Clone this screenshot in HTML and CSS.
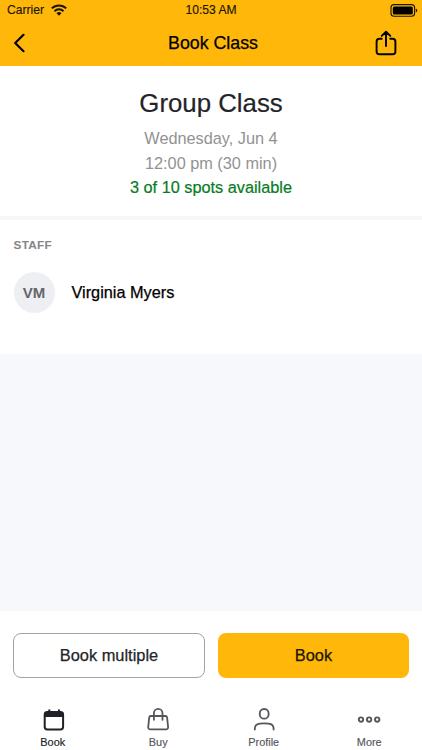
FILE: index.html
```html
<!DOCTYPE html>
<html lang="en">
<head>
<meta charset="utf-8">
<title>Book Class</title>
<link rel="stylesheet" href="styles.css">
</head>
<body>
<div class="app">
  <header class="header">
    <div class="status">
      <div class="carrier">Carrier
        <svg width="16" height="12" viewBox="0 0 16 12" fill="none" stroke="#1c1500" stroke-width="2"><path d="M.8 4.4a10.4 10.4 0 0 1 14.4 0M3.5 7.2a6.4 6.4 0 0 1 9 0"/><path d="M8 11.8 5.5 9.2a3.7 3.7 0 0 1 5 0z" fill="#1c1500" stroke="none"/></svg>
      </div>
      <div class="time">10:53 AM</div>
      <svg class="battery" width="28" height="13" viewBox="0 0 28 13"><rect x="1" y=".6" width="23.6" height="11.6" rx="3" fill="none" stroke="#1c1500" stroke-width="1.1"/><rect x="2.8" y="2.4" width="20" height="8" rx="1.5" fill="#000"/><path d="M25.8 4.4q1.5.6 1.5 2t-1.5 2z" fill="#1c1500"/></svg>
    </div>
    <div class="navbar">
      <svg width="12" height="20" viewBox="0 0 12 20" fill="none" stroke="#000" stroke-width="2.2" stroke-linecap="round" stroke-linejoin="round"><path d="M10.5 1.8 2.2 10l8.3 8.2"/></svg>
      <h1 class="title">Book Class</h1>
      <svg width="22" height="26" viewBox="0 0 22 26" fill="none" stroke="#000" stroke-width="1.9" stroke-linecap="round" stroke-linejoin="round"><path d="M6.7 8.8H4.4A2.8 2.8 0 0 0 1.6 11.6v9.8a2.8 2.8 0 0 0 2.8 2.8h13.2a2.8 2.8 0 0 0 2.8-2.8v-9.8a2.8 2.8 0 0 0-2.8-2.8h-2.3M11 16V2M6.7 5.9 11 1.7l4.3 4.2"/></svg>
    </div>
  </header>

  <section class="summary">
    <h2 class="class-name">Group Class</h2>
    <p>Wednesday, Jun 4</p>
    <p>12:00 pm (30 min)</p>
    <p class="spots">3 of 10 spots available</p>
  </section>

  <section class="staff">
    <h3 class="label">STAFF</h3>
    <div class="person"><span class="avatar">VM</span><span class="name">Virginia Myers</span></div>
  </section>

  <main class="blank"></main>

  <div class="actions">
    <button class="btn outline">Book multiple</button>
    <button class="btn primary">Book</button>
  </div>

  <nav class="tabs">
    <a class="tab active">
      <svg width="24" height="24" viewBox="0 0 24 24" fill="none" stroke="currentColor" stroke-width="2"><rect x="3.7" y="4.1" width="18.4" height="17.3" rx="2.6"/><path d="M3.7 4.1h18.4v4.5H3.7z" fill="currentColor" stroke="none"/><path d="M3.7 8.1h18.4M8.3 1.4v3M18 1.4v3"/></svg>
      <span>Book</span>
    </a>
    <a class="tab">
      <svg width="24" height="24" viewBox="0 0 24 24" fill="none" stroke="currentColor" stroke-width="1.8" stroke-linecap="round"><path d="M5 8h14.4a1.7 1.7 0 0 1 1.7 1.5l1 9.7a2 2 0 0 1-2 2.2H4.2a2 2 0 0 1-2-2.2l1-9.7A1.7 1.7 0 0 1 5 8zM7.9 11.8V5.2a4.3 4.3 0 0 1 8.6 0v6.6"/></svg>
      <span>Buy</span>
    </a>
    <a class="tab">
      <svg width="24" height="24" viewBox="0 0 24 24" fill="none" stroke="currentColor" stroke-width="1.8" stroke-linecap="round"><rect x="7.8" y="1" width="8.8" height="9.7" rx="4.3"/><path d="M2.8 21.5v-.7q0-4.6 5-5.1 4.4-.5 8.8 0 5 .5 5 5.1v.7"/></svg>
      <span>Profile</span>
    </a>
    <a class="tab">
      <svg width="24" height="24" viewBox="0 0 24 24" fill="none" stroke="currentColor" stroke-width="1.9"><circle cx="4" cy="11.6" r="2.2"/><circle cx="12.1" cy="11.6" r="2.2"/><circle cx="20.2" cy="11.6" r="2.2"/></svg>
      <span>More</span>
    </a>
  </nav>
</div>
</body>
</html>
```
FILE: styles.css
```css
* { box-sizing: border-box; margin: 0; padding: 0; }
body { font-family: "Liberation Sans", Arial, sans-serif; background: #fff; color: #000; }
svg { display: block; flex: none; }
.app { width: 422px; height: 750px; display: flex; flex-direction: column; overflow: hidden; }

.header { height: 66px; flex: none; background: #ffb80a; }
.status { height: 20px; padding: 0 4px 0 7px; display: grid; grid-template-columns: 1fr auto 1fr; align-items: center; font-size: 12.1px; color: #1c1500; -webkit-text-stroke: .15px; }
.carrier { display: flex; align-items: center; gap: 7px; }
.time { margin: 0 1.5px 0 -1.5px; }
.battery { justify-self: end; }
.navbar { height: 46px; padding: 0 25px 0 13px; display: grid; grid-template-columns: 24px 1fr 22px; align-items: center; }
.navbar svg { margin-top: -1px; }
.title { font-size: 17.8px; font-weight: 400; line-height: 20px; text-align: center; padding-left: 14px; margin-top: -1px; -webkit-text-stroke: .25px; }

.summary { height: 154px; flex: none; border-bottom: 4px solid #f7f7fa; padding-top: 21px; text-align: center; font-size: 16.3px; line-height: 24.5px; color: #929292; }
.class-name { font-size: 25.8px; font-weight: 400; line-height: 32px; color: #242428; margin-bottom: 7px; -webkit-text-stroke: .2px; }
.spots { color: #087a24; -webkit-text-stroke: .2px; }

.staff { height: 134px; flex: none; padding: 17px 13.5px 0; }
.label { font-size: 11.8px; line-height: 16px; letter-spacing: .3px; color: #858589; }
.person { display: flex; align-items: center; gap: 17px; margin-top: 19px; }
.avatar { width: 41px; height: 41px; border-radius: 50%; background: #eeeff2; color: #65666c; font-size: 15px; font-weight: 700; display: flex; align-items: center; justify-content: center; }
.name { font-size: 16.3px; -webkit-text-stroke: .25px; }

.blank { flex: 1; background: #f7f8fb; }

.actions { height: 89px; flex: none; padding: 22px 13px 0; display: grid; grid-template-columns: 192px 191px; column-gap: 13px; align-items: start; }
.btn { height: 45px; border-radius: 8px; font: 16.4px "Liberation Sans", Arial, sans-serif; -webkit-text-stroke: .25px; }
.outline { background: #fff; border: 1px solid #a3a3a5; color: #242428; }
.primary { background: #ffb80a; border: 0; color: #1c1500; }

.tabs { height: 50px; flex: none; display: grid; grid-template-columns: repeat(4, 1fr); color: #55565c; }
.tab { display: flex; flex-direction: column; align-items: center; padding-top: 8px; font-size: 10.9px; line-height: 12px; -webkit-text-stroke: .15px; }
.tab span { margin-top: 4px; }
.active { color: #202026; }
```
